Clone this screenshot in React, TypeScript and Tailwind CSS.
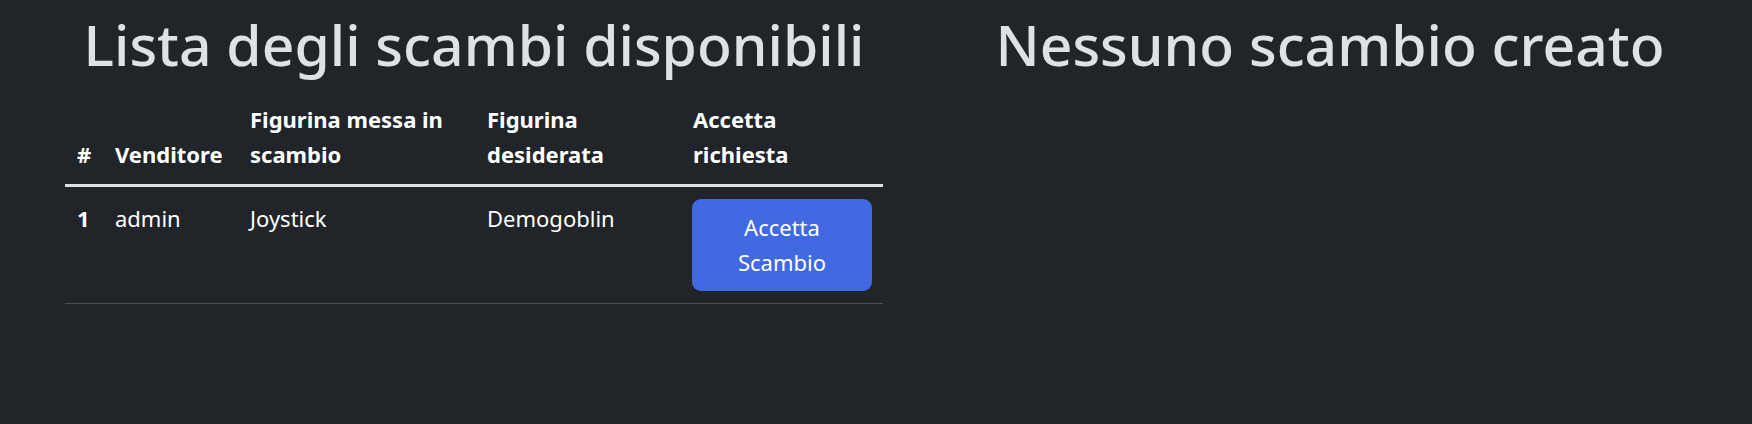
export default function App() {
  const headers = ['#', 'Venditore', 'Figurina messa in scambio', 'Figurina desiderata', 'Accetta richiesta'];

  return (
    <div
      className="flex w-[1752px] h-[424px] bg-[#212529] text-[#dee2e6]"
      style={{ fontFamily: '"Noto Sans", "Open Sans", sans-serif' }}
    >
      {/* Scambi disponibili */}
      <div className="ml-[65px] w-[818px] flex flex-col">
        <h1 className="mt-[8px] mb-[10px] text-center text-[57px] leading-[72px] font-medium whitespace-nowrap">
          Lista degli scambi disponibili
        </h1>
        <table className="w-full table-fixed text-white text-[22px] leading-[35px]">
          <colgroup>
            <col className="w-[38px]" />
            <col className="w-[135px]" />
            <col className="w-[237px]" />
            <col className="w-[206px]" />
            <col className="w-[202px]" />
          </colgroup>
          <thead>
            <tr className="border-b-[3px] border-[#dee2e6]">
              {headers.map((h) => (
                <th key={h} className="px-3 py-3 text-left align-bottom font-bold">
                  {h}
                </th>
              ))}
            </tr>
          </thead>
          <tbody>
            <tr className="border-b border-[#495057]">
              <th className="px-3 pt-[14px] pb-3 text-left align-top font-bold">1</th>
              <td className="px-3 pt-[14px] pb-3 align-top">admin</td>
              <td className="px-3 pt-[14px] pb-3 align-top">Joystick</td>
              <td className="px-3 pt-[14px] pb-3 align-top">Demogoblin</td>
              <td className="px-[11px] py-3 align-top">
                <button className="w-[180px] rounded-[9px] bg-[#4169e1] px-[18px] py-[11px] text-center text-white">
                  Accetta Scambio
                </button>
              </td>
            </tr>
          </tbody>
        </table>
      </div>

      {/* Scambi creati */}
      <div className="ml-[25px] flex-1">
        <h1 className="mt-[8px] text-center text-[57px] leading-[72px] font-medium whitespace-nowrap">
          Nessuno scambio creato
        </h1>
      </div>
    </div>
  );
}
